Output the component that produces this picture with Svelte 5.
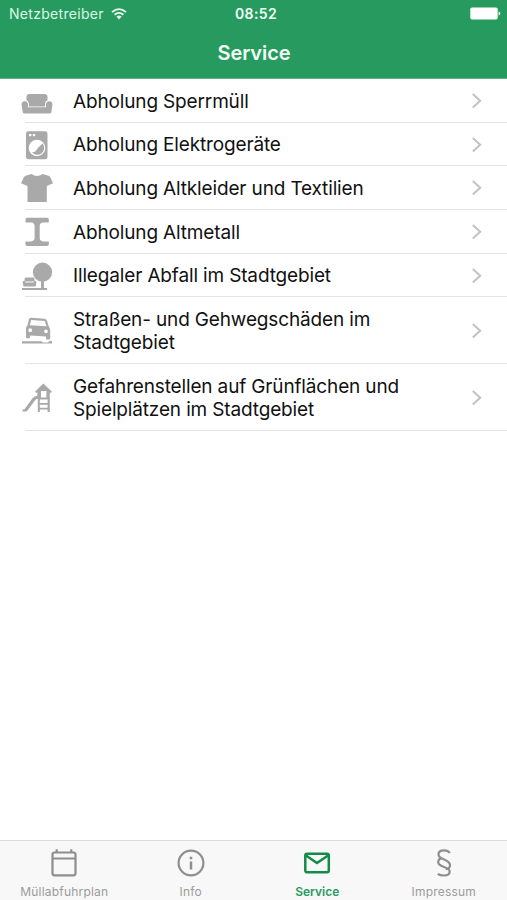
<script>
  const rows = [
    { icon: 'sofa', lines: ['Abholung Sperrmüll'], h: 44 },
    { icon: 'washer', lines: ['Abholung Elektrogeräte'], h: 43 },
    { icon: 'shirt', lines: ['Abholung Altkleider und Textilien'], h: 44 },
    { icon: 'beam', lines: ['Abholung Altmetall'], h: 44 },
    { icon: 'tree', lines: ['Illegaler Abfall im Stadtgebiet'], h: 43 },
    { icon: 'car', lines: ['Straßen- und Gehwegschäden im', 'Stadtgebiet'], h: 67 },
    { icon: 'slide', lines: ['Gefahrenstellen auf Grünflächen und', 'Spielplätzen im Stadtgebiet'], h: 67 }
  ];
  const tabs = [
    { id: 'calendar', label: 'Müllabfuhrplan' },
    { id: 'info', label: 'Info' },
    { id: 'mail', label: 'Service', active: true },
    { id: 'imprint', label: 'Impressum' }
  ];
</script>

<div class="screen">
  <header>
    <div class="status">
      <div class="carrier">
        <span>Netzbetreiber</span>
        <svg width="16" height="12" viewBox="0 0 16 12" fill="none" stroke="#e9fbee" stroke-width="1.8">
          <path d="M1 4.2Q8-2 15 4.2M3.5 6.8Q8 3 12.5 6.8" />
          <path d="M5.4 8.6Q8 6.6 10.6 8.6L8 11.4Z" fill="#e9fbee" stroke="none" />
        </svg>
      </div>
      <time>08:52</time>
      <svg class="battery" width="31" height="13" viewBox="0 0 31 13" fill="#fff">
        <rect x="0.3" y="0.5" width="27.4" height="12" rx="1.8" />
        <path d="M28.6 4.5Q30.3 5 30.3 6.5T28.6 8.5Z" />
      </svg>
    </div>
    <h1>Service</h1>
  </header>

  <main>
    {#each rows as row}
      <div class="row" style="height: {row.h}px">
        <svg class="icon" width="34" height="34" viewBox="0 0 34 34" fill="#a9a9a9">
          {#if row.icon === 'sofa'}
            <path d="M6.500 16.200V13Q6.500 10 9.500 10H24.500Q27.500 10 27.500 13V16.200Q25.200 17 25 20V22.600H9V20Q8.800 17 6.500 16.200Z" />
            <path d="M4.700 17.200Q7.900 17.300 8 20.500V23.200H26V20.500Q26.200 17.300 29.400 17.200Q32.600 17.400 32.400 20.600L31.400 28Q31.200 29.500 29.500 29.500H4.500Q2.900 29.500 2.700 28L1.600 20.600Q1.500 17.400 4.700 17.200Z" />
          {:else if row.icon === 'washer'}
            <rect x="6" y="3.300" width="21.500" height="28" rx="2.400" />
            <g fill="#fff">
              <rect x="9" y="6" width="2.400" height="2.200" />
              <rect x="12.800" y="6" width="2.400" height="2.200" />
              <circle cx="17" cy="20" r="8.300" />
            </g>
            <path d="M22.600 15.500A6.700 6.700 0 0 1 12 24.300C14.300 24.500 16 23.300 17.100 21.100S20.500 18 22.600 15.500Z" />
          {:else if row.icon === 'shirt'}
            <path d="M11.500 3Q17 7 22.500 3L28.500 4.800Q30 5.400 30.700 7L33 12.300L26.800 15V31H7.500V15L1 12.300L3.500 7Q4.200 5.400 5.700 4.800Z" />
          {:else if row.icon === 'beam'}
            <path d="M7 2.800H27Q28.800 2.800 28.800 4.600V7.600H23Q19.700 8 19.700 11V23Q19.700 26 23 26.400H28.800V29.300Q28.800 31.100 27 31.100H7Q5.500 31.100 5.500 29.300V26.400H11Q14.600 26 14.600 23V11Q14.600 8 11 7.600H5.500V4.600Q5.500 2.800 7 2.800Z" />
          {:else if row.icon === 'tree'}
            <circle cx="22.500" cy="13.200" r="9.600" />
            <path d="M21 21H24V29H27V31H2V29H21Z" />
            <path d="M5.500 18.500H13.500Q14.500 18.500 14.500 20V22.500H4.600V20Q4.600 18.500 5.500 18.500Z" />
            <path d="M4 21.800Q5.500 22 5.500 23.500H13.800Q13.900 21.800 15.200 21.800Q16.500 22 16.300 23.500L15.700 27.500H3.500L2.700 23.500Q2.600 22 4 21.800Z" />
          {:else if row.icon === 'car'}
            <path fill-rule="evenodd" d="M11 3.800L24.500 4.800Q26.400 5 27.100 7L28.800 12.400Q30.200 14 30.200 16V24.800Q30.200 25.600 29.200 25.600H27Q26 25.600 26 24.600V22.500L10 21.500V23.200Q10 24.200 9 24.200H7Q6 24.200 6 23.200V14.500Q6.100 12.500 7.600 11L8.800 5.600Q9.400 3.700 11 3.800ZM11.200 5.900L9.800 11.200L26.500 12.200L24.800 6.900ZM10.200 14.300A1.900 1.900 0 1 0 10.200 18.100A1.900 1.900 0 1 0 10.200 14.300ZM26 15.400A1.900 1.900 0 1 0 26 19.200A1.900 1.900 0 1 0 26 15.400Z" />
            <path d="M2 27.200H21.500L23 28.500H28L29.500 27H32V29.600H2Z" />
          {:else}
            <path d="M23.300 2.500L32 10.800L30.700 12L29.800 11.200V31H27.600V28.500H19.800V31H17.800V17.800Q15.800 18 14.700 19.800L7.700 29.200Q6.800 30.500 5.200 30.500H2.500V28.600H4.300L12.500 17.300Q14.300 15 17.300 14.700V11.200L16.200 12L15 10.800Z" />
            <path fill="#fff" d="M21 10H26.400V16.500H21ZM19.800 18.500H27.600V22H19.800ZM19.800 23.800H27.600V26.700H19.800Z" />
          {/if}
        </svg>
        <div class="body">
          <div class="label">
            {#each row.lines as line}<div>{line}</div>{/each}
          </div>
          <svg width="12" height="16" viewBox="0 0 12 16" fill="none" stroke="#c2c2c6" stroke-width="2">
            <path d="M1.800 1L9.200 7.700L1.800 14.400" />
          </svg>
        </div>
      </div>
    {/each}
  </main>

  <nav>
    {#each tabs as tab}
      <div class="tab" class:active={tab.active}>
        <svg width="30" height="30" viewBox="0 0 30 30" fill="none" stroke="currentColor" stroke-width="2.200">
          {#if tab.id === 'calendar'}
            <rect x="3.500" y="4.500" width="23" height="22.800" rx="2" />
            <path d="M3.500 10.500H26.500M7.700 1.300V4.500M22.300 1.300V4.500" />
          {:else if tab.id === 'info'}
            <circle cx="15" cy="15" r="12.400" />
            <path d="M15 13.500V21.500M15 8.800V11.200" stroke-width="2.500" />
          {:else if tab.id === 'mail'}
            <rect x="3.300" y="5.800" width="23.500" height="18.500" rx="1.800" stroke-width="2.500" />
            <path d="M4 7.500L15 15L26 7.500" stroke-width="2.500" />
          {:else}
            <path d="M20.800 5C19.500 3 17.500 2.300 15 2.300C11.500 2.300 9.500 4 9.500 6.600C9.500 12.200 21 11 21 17.200C21 19.500 19.200 21 16.800 21.200M13.500 10.200C11 10.500 9.200 12 9.200 14.300C9.200 19.700 20.700 18.200 20.700 23.500C20.700 26 18.500 27.500 15 27.500C12 27.500 10.300 27 8.800 25.800" />
          {/if}
        </svg>
        <span>{tab.label}</span>
      </div>
    {/each}
  </nav>
</div>

<style>
  .screen {
    width: 507px;
    height: 900px;
    display: flex;
    flex-direction: column;
    background: #fff;
    font-family: Inter, "Liberation Sans", sans-serif;
    overflow: hidden;
  }
  svg { display: block; flex: none; }
  header {
    height: 79px;
    box-sizing: border-box;
    background: #279b5f;
    border-bottom: 1px solid #5eb585;
    color: #f3fff6;
  }
  .status {
    height: 27px;
    display: grid;
    grid-template-columns: 1fr auto 1fr;
    align-items: center;
    padding: 0 6px 0 9px;
    font-size: 14px;
  }
  .carrier { display: flex; align-items: center; gap: 7px; color: #dcf7e3; letter-spacing: 0.3px; }
  time { font-weight: 600; letter-spacing: 0.4px; padding-left: 2px; }
  .battery { justify-self: end; }
  h1 {
    margin: 0;
    height: 51px;
    line-height: 52px;
    text-align: center;
    font-size: 20px;
    font-weight: 600;
    letter-spacing: -0.1px;
    padding-left: 1px;
  }
  main { flex: 1; }
  .row { display: flex; align-items: center; padding-left: 20px; position: relative; }
  .row::after {
    content: "";
    position: absolute;
    left: 25px;
    right: 0;
    bottom: 0;
    height: 1px;
    background: #e4e4e6;
  }
  .body { flex: 1; display: flex; align-items: center; justify-content: space-between; padding: 0 24px 0 19px; }
  .label { font-size: 19px; line-height: 23px; letter-spacing: -0.15px; color: #111; white-space: nowrap; }
  nav {
    height: 60px;
    box-sizing: border-box;
    display: flex;
    padding-left: 1px;
    border-top: 1px solid #dcdcdc;
    background: #f8f8f8;
  }
  .tab {
    flex: 1;
    display: flex;
    flex-direction: column;
    align-items: center;
    padding-top: 7px;
    color: #8e8e8e;
  }
  .tab span { margin-top: 6px; font-size: 12px; line-height: 15px; letter-spacing: 0.2px; color: #9b9b9b; }
  .tab.active { color: #118c49; }
  .tab.active span { color: #279b5f; font-weight: 600; letter-spacing: 0; }
</style>
